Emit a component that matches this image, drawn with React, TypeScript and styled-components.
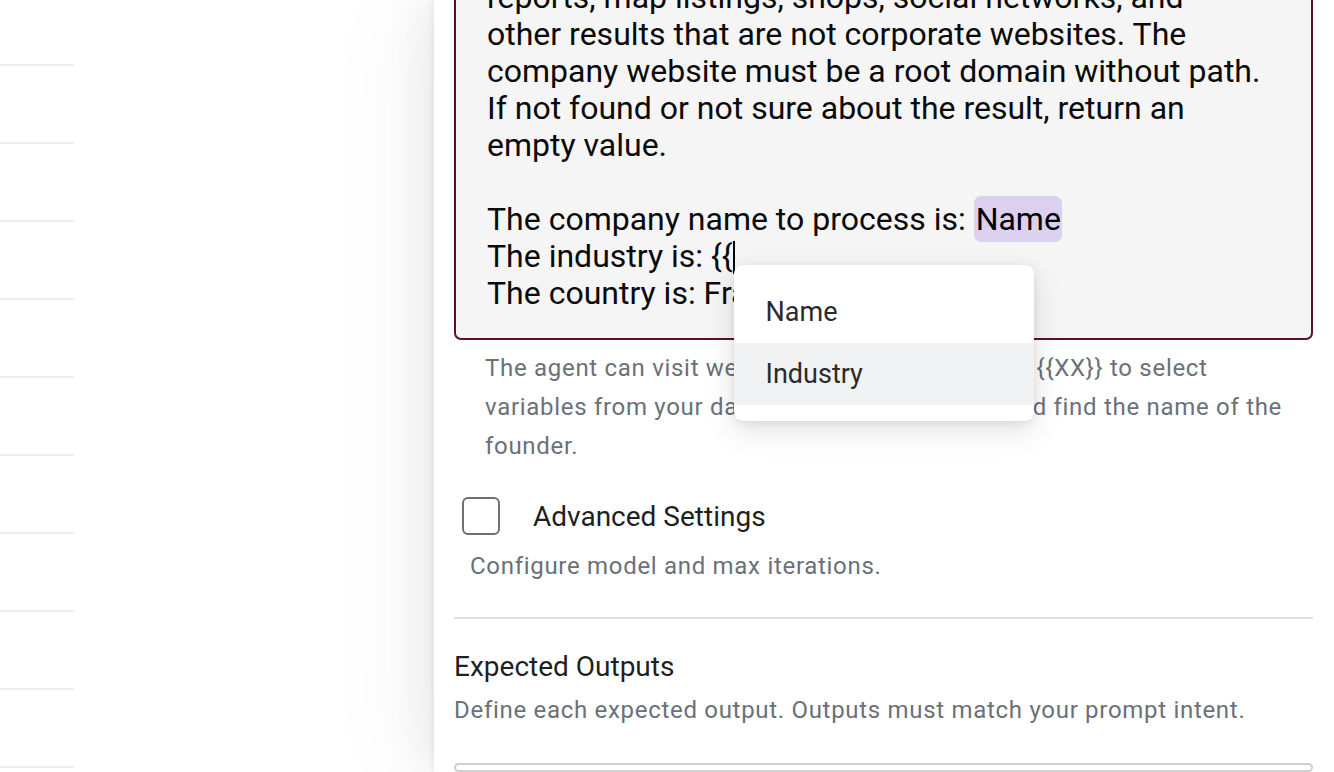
import React from 'react'
import styled, { createGlobalStyle } from 'styled-components'

const GlobalStyle = createGlobalStyle`
  html, body {
    margin: 0;
    padding: 0;
    height: 100%;
    overflow: hidden;
    background: #ffffff;
    font-family: Roboto, 'Liberation Sans', sans-serif;
  }
  #root {
    height: 100%;
  }
`

const Page = styled.div`
  display: flex;
  height: 772px;
  width: 1334px;
  overflow: hidden;
`

const Backdrop = styled.div`
  flex: 0 0 434px;
  display: flex;
  flex-direction: column;
  margin-top: -12px;
`

const ListRow = styled.div`
  width: 74px;
  height: 76px;
  flex: 0 0 auto;
  border-bottom: 2px solid #ececec;
`

const Drawer = styled.div`
  flex: 1;
  position: relative;
  background: #ffffff;
  padding: 0 21px 0 20px;
  box-shadow: -2px 0 6px rgba(0, 0, 0, 0.05), -12px 0 40px rgba(0, 0, 0, 0.06),
    -30px 0 90px rgba(0, 0, 0, 0.04);
  display: flex;
  flex-direction: column;
`

const Editor = styled.div`
  position: relative;
  margin-top: -47px;
  padding: 24px 31px 26px 31px;
  border: 2px solid #5a1420;
  border-radius: 7px;
  background: #f5f5f5;
  font-size: 32px;
  line-height: 37px;
  color: #0a0a0a;
`

const Line = styled.div`
  white-space: nowrap;
  min-height: 37px;
`

const Chip = styled.span`
  background: #dcd0f1;
  border-radius: 7px;
  padding: 4px 1px 4px 2px;
  color: #000;
`

const Caret = styled.span`
  position: relative;
  display: inline-block;
  width: 2px;
  height: 33px;
  background: #000;
  vertical-align: -7px;
`

const Menu = styled.div`
  position: absolute;
  top: 24px;
  left: 1px;
  width: 300px;
  padding: 16px 0;
  background: #ffffff;
  border-radius: 9px;
  box-shadow: 0 10px 30px rgba(0, 0, 0, 0.12), 0 2px 8px rgba(0, 0, 0, 0.08);
  z-index: 5;
`

const MenuItem = styled.div<{ $active?: boolean }>`
  height: 62px;
  display: flex;
  align-items: center;
  padding-left: 32px;
  font-size: 27px;
  color: #2b2b2b;
  background: ${(p) => (p.$active ? '#f1f2f4' : 'transparent')};
`

const Helper = styled.p<{ $indent: number }>`
  margin: 6px 0 0;
  padding-left: ${(p) => p.$indent}px;
  font-size: 24px;
  line-height: 39px;
  letter-spacing: 0.7px;
  color: #6b7079;
  white-space: nowrap;
`

const CheckRow = styled.label`
  display: flex;
  align-items: center;
  gap: 33px;
  margin-top: 31px;
  padding-left: 8px;
  font-size: 28px;
  color: #1f1f1f;
`

const Box = styled.span`
  width: 34px;
  height: 34px;
  border: 2px solid #6b7079;
  border-radius: 6px;
  box-sizing: content-box;
`

const Divider = styled.hr`
  margin: 31px 0 0;
  border: none;
  border-top: 2px solid #dddddd;
`

const SectionTitle = styled.h3`
  margin: 30px 0 0;
  font-size: 28px;
  line-height: 36px;
  font-weight: 400;
  color: #1f1f1f;
`

const OutputCard = styled.div`
  margin-top: 33px;
  height: 60px;
  border: 2px solid #d0d0d0;
  border-radius: 14px;
`

const App: React.FC = () => {
  const rows = Array.from({ length: 11 })
  return (
    <>
      <GlobalStyle />
      <Page>
        <Backdrop>
          {rows.map((_, i) => (
            <ListRow key={i} />
          ))}
        </Backdrop>
        <Drawer>
          <Editor>
            <Line>reports, map listings, shops, social networks, and</Line>
            <Line>other results that are not corporate websites. The</Line>
            <Line>company website must be a root domain without path.</Line>
            <Line>If not found or not sure about the result, return an</Line>
            <Line>empty value.</Line>
            <Line />
            <Line>
              The company name to process is: <Chip>Name</Chip>
            </Line>
            <Line>
              The industry is: {'{{'}
              <Caret>
                <Menu>
                  <MenuItem>Name</MenuItem>
                  <MenuItem $active>Industry</MenuItem>
                </Menu>
              </Caret>
            </Line>
            <Line>The country is: France</Line>
          </Editor>
          <Helper $indent={31} style={{ marginTop: 9 }}>
            The agent can visit websites and do search. Use {'{{XX}}'} to select
            <br />
            variables from your data. Ex: visit the website and find the name of the
            <br />
            founder.
          </Helper>
          <CheckRow>
            <Box />
            Advanced Settings
          </CheckRow>
          <Helper $indent={16} style={{ marginTop: 12 }}>
            Configure model and max iterations.
          </Helper>
          <Divider />
          <SectionTitle>Expected Outputs</SectionTitle>
          <Helper $indent={0} style={{ marginTop: 6 }}>
            Define each expected output. Outputs must match your prompt intent.
          </Helper>
          <OutputCard />
        </Drawer>
      </Page>
    </>
  )
}

export default App
